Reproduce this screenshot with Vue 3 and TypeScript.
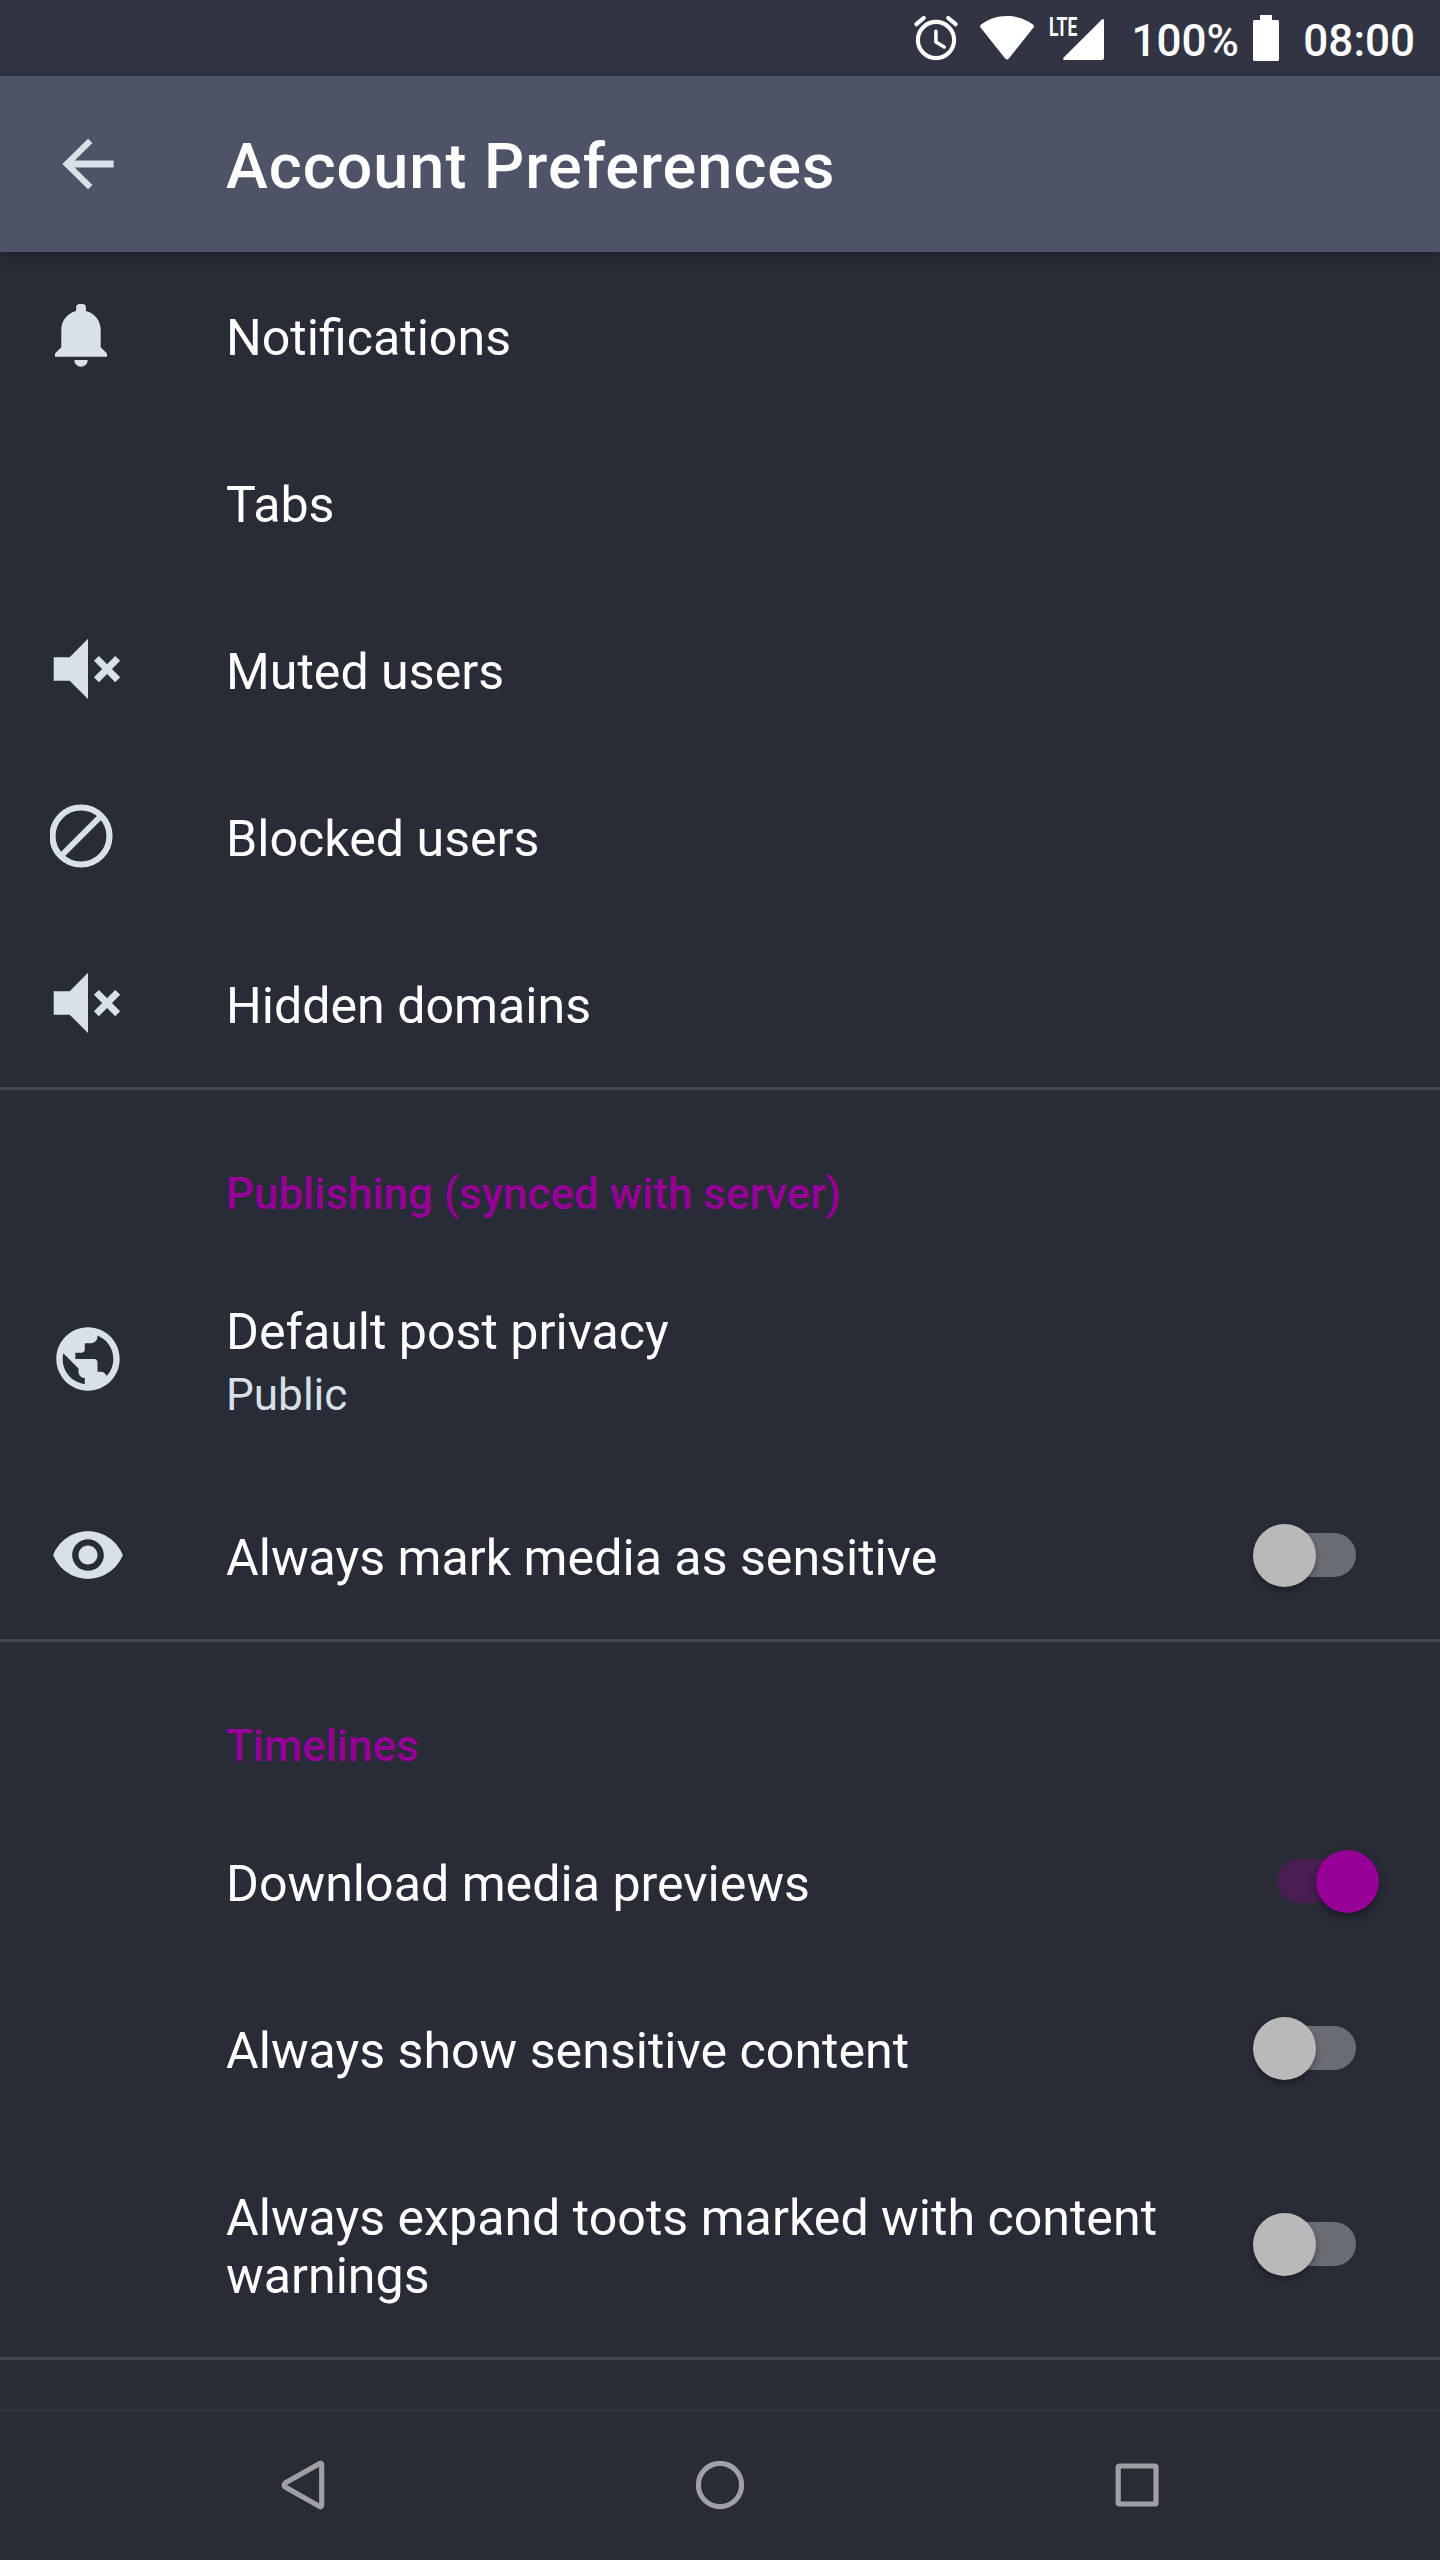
<script setup lang="ts">
import { ref } from 'vue'

type IconName = 'bell' | 'mute' | 'block' | 'globe' | 'eye'

interface Preference {
  title: string
  summary?: string
  icon?: IconName
  checked?: boolean
}

interface Category {
  heading?: string
  items: Preference[]
}

const categories = ref<Category[]>([
  {
    items: [
      { title: 'Notifications', icon: 'bell' },
      { title: 'Tabs' },
      { title: 'Muted users', icon: 'mute' },
      { title: 'Blocked users', icon: 'block' },
      { title: 'Hidden domains', icon: 'mute' },
    ],
  },
  {
    heading: 'Publishing (synced with server)',
    items: [
      { title: 'Default post privacy', summary: 'Public', icon: 'globe' },
      { title: 'Always mark media as sensitive', icon: 'eye', checked: false },
    ],
  },
  {
    heading: 'Timelines',
    items: [
      { title: 'Download media previews', checked: true },
      { title: 'Always show sensitive content', checked: false },
      { title: 'Always expand toots marked with content warnings', checked: false },
    ],
  },
])

function toggle(item: Preference) {
  if (item.checked !== undefined) item.checked = !item.checked
}
</script>

<template>
  <div class="screen">
    <header class="status-bar">
      <svg class="alarm" viewBox="0 0 46 46" fill="none" stroke="#fff" stroke-linecap="round">
        <circle cx="23" cy="25" r="18.1" stroke-width="4.1" />
        <path d="M22.9 16.2V27L31.2 32" stroke-width="3.5" stroke-linejoin="round" />
        <path d="M3.4 9.2L10.8 3M42.6 9.2L35.2 3" stroke-width="4.2" />
      </svg>
      <svg class="wifi" viewBox="0 0 54 44" fill="#fff">
        <path d="M27 0C17 0 8 3.400 1.100 8.500Q-.6 9.900 .7 11.700L25.200 42.500Q27 44.400 28.800 42.500L53.300 11.700Q54.600 9.900 52.900 8.500C46 3.400 37 0 27 0Z" />
      </svg>
      <div class="signal">
        <span class="network">LTE</span>
        <svg viewBox="0 0 41 41" fill="#fff">
          <path d="M41 2V39Q41 41 39 41H2Q-1 41 .7 38.600L38.600 .7Q41-1 41 2Z" />
        </svg>
      </div>
      <span class="percent">100%</span>
      <svg class="battery" viewBox="0 0 26 46" fill="#fff">
        <path d="M7 0H19V5H24.500Q26 5 26 6.500V44.500Q26 46 24.500 46H1.500Q0 46 0 44.500V6.500Q0 5 1.500 5H7Z" />
      </svg>
      <span class="clock">08:00</span>
    </header>

    <div class="toolbar">
      <button class="back" aria-label="Back">
        <svg viewBox="0 0 24 24" fill="#d9e1e8">
          <path d="M20.100 10.900H7.800l5.590-5.550L12 4l-8.100 8L12 20l1.410-1.390L7.800 13.100H20.100z" />
        </svg>
      </button>
      <h1>Account Preferences</h1>
    </div>

    <main class="preferences">
      <section v-for="(category, c) in categories" :key="c" class="category">
        <h2 v-if="category.heading">{{ category.heading }}</h2>
        <div v-for="item in category.items" :key="item.title" class="row" @click="toggle(item)">
          <div class="icon">
            <svg v-if="item.icon === 'bell'" viewBox="0 0 75 75" fill="#d9e1e8">
              <path d="M26.100 13V9.500Q26.100 6 29.600 6H32.400Q35.900 6 35.900 9.500V13C44.500 15 50.700 22.500 50.700 32V49.300L57 55.500V58.700H5V55.500L11.300 49.300V32C11.300 22.500 17.500 15 26.100 13Z" />
              <path d="M24.300 62H37.700A6.700 6.700 0 0 1 24.300 62Z" />
            </svg>
            <svg v-else-if="item.icon === 'mute'" viewBox="0 0 75 75" fill="#d9e1e8">
              <path d="M3.700 25.300H19.700L38 6.700V67L19.700 48.700H3.700Z" />
              <path d="M46.400 26.400L67.700 47.700M67.700 26.400L46.400 47.700" stroke="#d9e1e8" stroke-width="7" />
            </svg>
            <svg v-else-if="item.icon === 'block'" viewBox="0 0 75 75" fill="none" stroke="#d9e1e8">
              <circle cx="31" cy="37" r="28.500" stroke-width="6.200" />
              <path d="M12 56L50 18" stroke-width="6" />
            </svg>
            <svg v-else-if="item.icon === 'globe'" class="material" viewBox="0 0 24 24" fill="#d9e1e8">
              <path d="M12 2C6.480 2 2 6.480 2 12s4.480 10 10 10 10-4.480 10-10S17.520 2 12 2zm-1 17.930c-3.950-.490-7-3.850-7-7.930 0-.620.080-1.210.210-1.790L9 15v1c0 1.100.9 2 2 2v1.930zm6.900-2.540c-.260-.810-1-1.390-1.900-1.390h-1v-3c0-.550-.450-1-1-1H8v-2h2c.550 0 1-.450 1-1V7h2c1.100 0 2-.9 2-2v-.410c2.930 1.190 5 4.060 5 7.410 0 2.080-.8 3.970-2.100 5.390z" />
            </svg>
            <svg v-else-if="item.icon === 'eye'" class="material eye" viewBox="0 0 24 24" fill="#d9e1e8">
              <path d="M12 4.500C7 4.500 2.730 7.610 1 12c1.730 4.390 6 7.500 11 7.500s9.270-3.110 11-7.500c-1.730-4.390-6-7.500-11-7.500zM12 17c-2.760 0-5-2.240-5-5s2.240-5 5-5 5 2.240 5 5-2.240 5-5 5zm0-8c-1.660 0-3 1.340-3 3s1.340 3 3 3 3-1.340 3-3-1.340-3-3-3z" />
            </svg>
          </div>
          <div class="text">
            <div class="title">{{ item.title }}</div>
            <div v-if="item.summary" class="summary">{{ item.summary }}</div>
          </div>
          <div v-if="item.checked !== undefined" class="switch" :class="{ on: item.checked }">
            <span class="track"></span>
            <span class="thumb"></span>
          </div>
        </div>
      </section>
    </main>

    <nav class="nav-bar">
      <svg viewBox="0 0 50 50"><path d="M8 22.500L41.700 3.500Q43.700 2.500 43.700 4.800V45.200Q43.700 47.500 41.700 46.500L8 27.500Q4 25 8 22.500Z" /></svg>
      <svg viewBox="0 0 50 50"><circle cx="25" cy="25" r="21.600" /></svg>
      <svg viewBox="0 0 50 50"><rect x="6.200" y="6" width="37.800" height="38" rx="1" /></svg>
    </nav>
  </div>
</template>

<style>
body {
  margin: 0;
  background: #282c37;
}
</style>

<style scoped>
.screen {
  display: flex;
  flex-direction: column;
  width: 1440px;
  height: 2560px;
  overflow: hidden;
  background: #282c37;
  color: #fff;
  font-family: Roboto, "Liberation Sans", sans-serif;
}

svg {
  display: block;
  flex: none;
}

.status-bar {
  display: flex;
  flex: none;
  align-items: flex-start;
  justify-content: flex-end;
  box-sizing: border-box;
  height: 76px;
  padding: 15px 25px 0 0;
  background: #313543;
  font-size: 44px;
  font-weight: 500;
  line-height: 52px;
  white-space: nowrap;
}

.alarm {
  width: 46px;
  height: 46px;
  margin-right: 21px;
}

.wifi {
  width: 54px;
  height: 44px;
  margin: 1px 16px 0 0;
}

.signal {
  position: relative;
  width: 54px;
  height: 46px;
  margin-right: 27px;
}

.signal svg {
  width: 41px;
  height: 41px;
  margin: 4px 0 0 13px;
}

.network {
  position: absolute;
  top: -3px;
  left: -1px;
  font-size: 25.8px;
  font-weight: 700;
  line-height: 30px;
  transform: scaleX(0.68);
  transform-origin: 0 0;
}

.percent {
  margin-right: 14.5px;
}

.battery {
  width: 26px;
  height: 46px;
  margin-right: 24px;
}

.toolbar {
  position: relative;
  z-index: 1;
  display: flex;
  flex: none;
  align-items: center;
  height: 176px;
  background: #4e5368;
  box-shadow: 0 3px 12px rgba(0, 0, 0, 0.27);
}

.back {
  width: 226px;
  padding: 0 0 0 50px;
  border: 0;
  background: none;
}

.back svg {
  width: 76px;
  height: 76px;
}

.toolbar h1 {
  margin: 0;
  padding-top: 6px;
  font-size: 63px;
  font-weight: 500;
  line-height: 74px;
  letter-spacing: 1px;
}

.preferences {
  flex: 1;
  min-height: 0;
}

.category {
  border-bottom: 3px solid #444751;
}

.category h2 {
  box-sizing: border-box;
  height: 156px;
  margin: 0;
  padding: 78px 0 0 226px;
  color: #960096;
  font-size: 43.9px;
  font-weight: 500;
  line-height: 52px;
}

.row {
  display: flex;
  align-items: center;
}

.icon {
  flex: none;
  box-sizing: border-box;
  width: 226px;
  padding-left: 50px;
}

.icon svg {
  width: 75px;
  height: 75px;
}

.icon .material {
  width: 76px;
  height: 76px;
}

.icon .eye {
  margin-bottom: 1px;
}

.text {
  flex: 1;
  padding: 57px 0 52px;
}

.title {
  font-size: 50.15px;
  line-height: 58px;
}

.summary {
  margin: 8px 0 -1px;
  color: #d9e1e8;
  font-size: 44.1px;
  line-height: 52px;
}

.switch {
  position: relative;
  flex: none;
  width: 126px;
  height: 63px;
  margin: 0 61px 0 50px;
}

.track {
  position: absolute;
  top: 9px;
  left: 17px;
  width: 85.5px;
  height: 44px;
  border-radius: 22px;
  background: #696c74;
}

.thumb {
  position: absolute;
  top: 0;
  left: 0;
  width: 63px;
  height: 63px;
  border-radius: 50%;
  background: #b9b9b9;
  box-shadow: 0 3px 6px rgba(0, 0, 0, 0.35);
}

.on .track {
  left: 23.5px;
  background: #491f53;
}

.on .thumb {
  left: 63px;
  background: #960096;
  box-shadow: 0 4px 9px rgba(0, 0, 0, 0.4);
}

.nav-bar {
  display: flex;
  flex: none;
  align-items: center;
  justify-content: center;
  gap: 367px;
  box-sizing: border-box;
  height: 151px;
  padding-bottom: 3px;
  border-top: 3px solid #30343f;
  background: #282c37;
}

.nav-bar svg {
  width: 50px;
  height: 50px;
  fill: none;
  stroke: #9fa0a5;
  stroke-width: 5.2;
}
</style>
